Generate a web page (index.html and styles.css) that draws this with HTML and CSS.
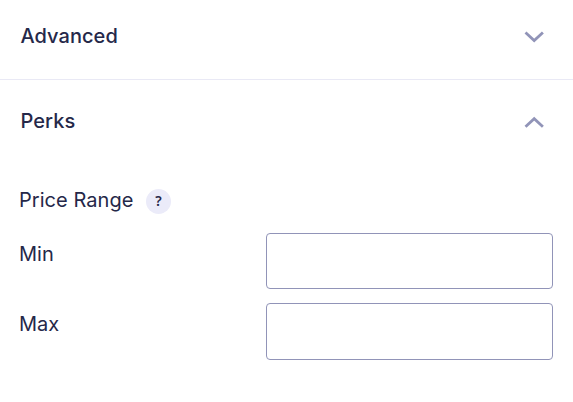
FILE: index.html
```html
<!DOCTYPE html>
<html lang="en">

<head>
    <meta charset="utf-8">
    <title>Filters</title>
    <link rel="stylesheet" href="styles.css">
</head>

<body>
    <div class="section">
        <div class="section-header">
            <h3>Advanced</h3>
            <svg class="chevron" width="20" height="12" viewBox="0 0 20 12">
                <path d="M1.5 1.5L10.2 9.5L18.9 1.5" />
            </svg>
        </div>
    </div>
    <div class="section">
        <div class="section-header">
            <h3>Perks</h3>
            <svg class="chevron" width="20" height="12" viewBox="0 0 20 12">
                <path d="M1.5 10.7L10.2 2.7L18.9 10.7" />
            </svg>
        </div>
        <div class="section-body">
            <div class="title">
                <span class="title-text">Price Range</span>
                <span class="help">?</span>
            </div>
            <div class="field">
                <label for="min">Min</label>
                <input type="text" id="min">
            </div>
            <div class="field field-max">
                <label for="max">Max</label>
                <input type="text" id="max">
            </div>
        </div>
    </div>
</body>

</html>
```

FILE: styles.css
```css
body {
    margin: 0;
    font-family: Inter, sans-serif;
    font-size: 20px;
    line-height: 24px;
    color: #252849;
    background: #fff;
}

.section + .section {
    border-top: 1px solid #e9e9f5;
}

.section-header {
    display: flex;
    align-items: center;
    justify-content: space-between;
    height: 55px;
    padding: 9px 29px 15px 20px;
}

h3 {
    margin: 0;
    padding: 0 0 2px 0.5px;
    font-size: 20px;
    font-weight: 500;
    letter-spacing: 0.05px;
}

.section + .section .section-header {
    padding-top: 14px;
}

.chevron {
    fill: none;
    stroke: #9194b8;
    stroke-width: 2.8;
}

.section-body {
    padding: 25px 20px 0 19px;
}

.title {
    display: flex;
    align-items: center;
    height: 25px;
}

.title-text {
    width: 127px;
    padding-bottom: 3px;
    letter-spacing: 0.05px;
}

.help {
    width: 25px;
    height: 25px;
    border-radius: 50%;
    background: #ebebf9;
    font-family: "Noto Sans", sans-serif;
    font-size: 14px;
    font-weight: 600;
    line-height: 24px;
    text-align: center;
}

.field {
    display: flex;
    justify-content: space-between;
    margin-top: 19px;
}

.field label {
    padding-top: 9px;
}

.field input {
    box-sizing: border-box;
    width: 287px;
    height: 56px;
    border: 1px solid #9194b8;
    border-radius: 4px;
    background: #fff;
    font: inherit;
}

.field-max {
    margin-top: 14px;
}

.field-max input {
    height: 57px;
}
```
